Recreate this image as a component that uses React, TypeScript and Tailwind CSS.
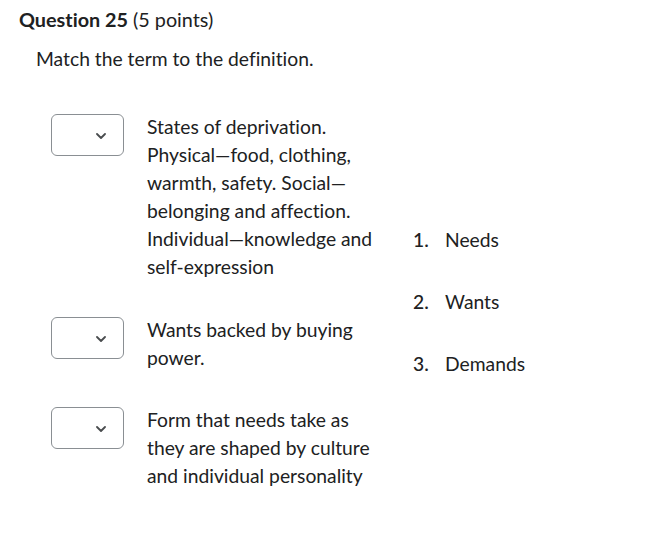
const rows = [
  'States of deprivation. Physical—food, clothing, warmth, safety. Social—belonging and affection. Individual—knowledge and self-expression',
  'Wants backed by buying power.',
  'Form that needs take as they are shaped by culture and individual personality',
];

const answers = ['Needs', 'Wants', 'Demands'];

function Select() {
  return (
    <div className="mt-[1px] flex h-[42px] w-[73px] shrink-0 items-center justify-end rounded-[6px] border border-[#8a8f93] bg-white pr-[17px]">
      <svg width="10" height="6" viewBox="0 0 10 6" fill="none" className="mt-[1px]">
        <path d="M1 1l4 4 4-4" stroke="#494c4e" strokeWidth="1.8" strokeLinecap="round" strokeLinejoin="round" />
      </svg>
    </div>
  );
}

export default function App() {
  return (
    <div
      className="min-h-[549px] w-[668px] bg-white text-[#202122] [font-variant-ligatures:none]"
      style={{ fontFamily: 'Lato, "Noto Sans", sans-serif' }}
    >
      <div className="pl-[19px] pt-[7px]">
        <h2 className="text-[19.8px] leading-[24px]">
          <span className="font-bold">Question 25</span> (5 points)
        </h2>
        <p className="mt-[14px] pl-[17px] text-[19.3px] leading-[28px]">Match the term to the definition.</p>
      </div>

      <div className="mt-[40px] flex pl-[51px]">
        <div className="flex flex-col gap-[34px]">
          {rows.map((text, i) => (
            <div key={i} className={`flex items-start ${i === 0 ? 'mb-[1px]' : ''}`}>
              <Select />
              <p className="ml-[23px] w-[232px] text-[19.3px] leading-[28px]">{text}</p>
            </div>
          ))}
        </div>
        <div className="ml-[34px] flex flex-col justify-center gap-[34px] pt-[1px] text-[19.3px] leading-[28px]">
          {answers.map((a, i) => (
            <div key={a} className="flex">
              <span className="w-[32px] font-medium">{i + 1}.</span>
              <span>{a}</span>
            </div>
          ))}
        </div>
      </div>
    </div>
  );
}
